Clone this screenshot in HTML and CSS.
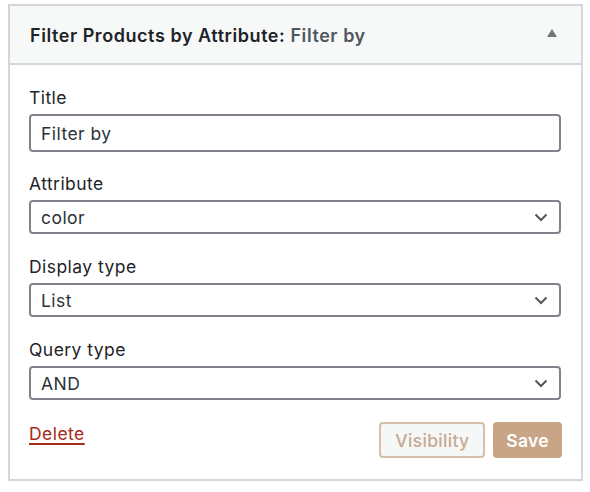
FILE: index.html
```html
<!DOCTYPE html>
<html>
<head>
<meta charset="utf-8">
<link rel="stylesheet" href="styles.css">
</head>
<body>
<div class="widget">
  <div class="widget-top">
    <h3 class="widget-title">Filter Products by Attribute:<span class="in-title"> Filter by</span></h3>
    <svg class="toggle" width="10" height="8" viewBox="0 0 10 8"><polygon points="5,0 10,8 0,8" fill="#72777c"/></svg>
  </div>
  <div class="widget-inside">
    <div class="field field-title">
      <label class="lbl">Title</label>
      <div class="input">Filter by</div>
    </div>
    <div class="field">
      <label class="lbl">Attribute</label>
      <div class="select"><span>color</span><svg class="chev" width="14" height="9" viewBox="0 0 14 9"><polyline points="1.5,1.5 7,7 12.5,1.5" fill="none" stroke="#50575e" stroke-width="2"/></svg></div>
    </div>
    <div class="field">
      <label class="lbl">Display type</label>
      <div class="select"><span>List</span><svg class="chev" width="14" height="9" viewBox="0 0 14 9"><polyline points="1.5,1.5 7,7 12.5,1.5" fill="none" stroke="#50575e" stroke-width="2"/></svg></div>
    </div>
    <div class="field">
      <label class="lbl">Query type</label>
      <div class="select"><span>AND</span><svg class="chev" width="14" height="9" viewBox="0 0 14 9"><polyline points="1.5,1.5 7,7 12.5,1.5" fill="none" stroke="#50575e" stroke-width="2"/></svg></div>
    </div>
    <div class="actions">
      <a class="delete" href="#">Delete</a>
      <div class="buttons">
        <span class="btn btn-secondary">Visibility</span>
        <span class="btn btn-primary">Save</span>
      </div>
    </div>
  </div>
</div>
</body>
</html>
```
FILE: styles.css
```css
* { box-sizing: border-box; }
body {
  margin: 0;
  padding: 4px 7px 0 8px;
  font-family: Inter, "Liberation Sans", sans-serif;
  color: #1d2327;
  background: #fff;
}
.widget {
  border: 2px solid #d4d6d9;
  background: #fff;
  height: 477px;
}
.widget-top {
  height: 59px;
  background: #f7f8f8;
  border-bottom: 2px solid #d4d6d9;
  display: flex;
  align-items: center;
  justify-content: space-between;
  padding: 1px 24px 0 20px;
}
.widget-title {
  margin: 0;
  font-size: 18px;
  font-weight: 600;
  color: #1d2327;
  letter-spacing: 0.56px;
}
.in-title { color: #50575e; }
.toggle { margin-top: -5px; }
.widget-inside {
  padding: 23px 20px 0 19px;
  display: flex;
  flex-direction: column;
}
.field {
  display: flex;
  flex-direction: column;
  gap: 6px;
  margin-bottom: 23px;
}
.field-title { margin-bottom: 22px; }
.lbl {
  font-size: 17.5px;
  line-height: 20px;
  letter-spacing: 0.45px;
  color: #1d2327;
}
.input, .select {
  border: 2px solid #7e848a;
  border-radius: 4px;
  font-size: 17.5px;
  letter-spacing: 0.45px;
  color: #2c3338;
  display: flex;
  align-items: center;
  padding: 0 10px;
}
.input { height: 38px; }
.select { height: 34px; justify-content: space-between; padding-right: 11px; }
.actions {
  display: flex;
  justify-content: space-between;
  align-items: flex-start;
  margin-top: -1px;
}
.delete {
  color: #a52a18;
  font-size: 17.5px;
  letter-spacing: 0.45px;
  text-decoration: underline;
  text-decoration-thickness: 2px;
  text-underline-offset: 3px;
  margin-top: 1px;
}
.buttons { display: flex; gap: 8px; margin-right: -1px; }
.btn {
  height: 36px;
  border-radius: 4px;
  font-size: 17.5px;
  letter-spacing: 0.3px;
  display: flex;
  align-items: center;
  padding: 0 14px;
}
.btn-secondary {
  border: 2px solid #d6bfa9;
  background: #f6f7f7;
  color: #c7aa92;
  font-weight: 500;
}
.btn-primary {
  background: #c9a588;
  color: #fff;
  font-weight: 600;
  padding: 0 13px;
}
```
